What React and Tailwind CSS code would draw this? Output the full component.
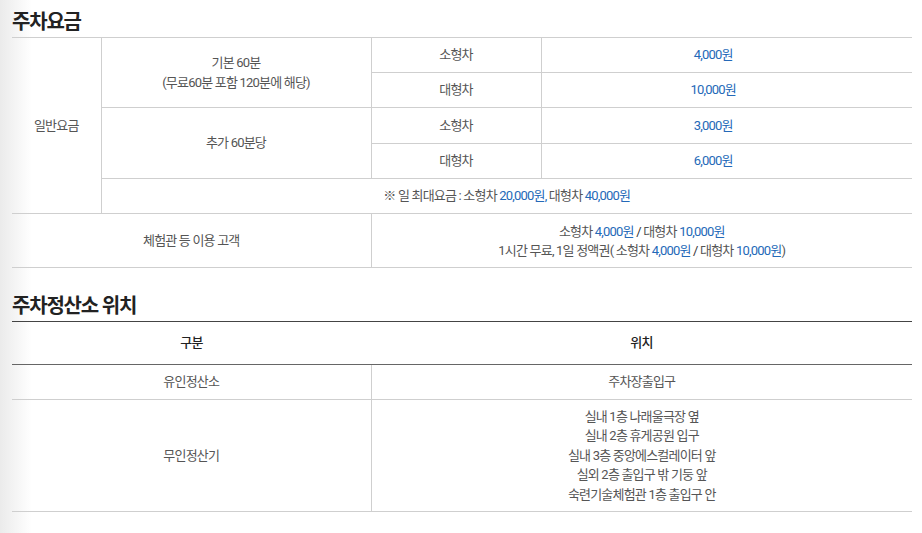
const F = { fontFamily: "Roboto, 'Noto Sans CJK KR', sans-serif" };

const B = ({ children }) => <span className="text-[#2469b8]">{children}</span>;

export default function App() {
  const cell = "border-b border-[#cfcfcf] text-center align-middle p-0";
  const price = cell + " pr-[27px]";
  return (
    <div
      style={F}
      className="min-h-[533px] w-[922px] bg-[linear-gradient(to_right,#ebebeb,#ffffff_32px)] text-[13px] leading-[20px] tracking-[-0.8px] text-[#555]"
    >
      <div className="ml-3 w-[900px] pt-[7px]">
        <h2 className="h-[30px] text-[20px] font-bold leading-[30px] tracking-[-1.2px] text-[#222]">주차요금</h2>
        <table className="w-full border-t border-[#cfcfcf]">
          <colgroup>
            <col className="w-[89px]" />
            <col className="w-[270px]" />
            <col className="w-[170px]" />
            <col />
          </colgroup>
          <tbody>
            <tr className="h-[35px]">
              <td rowSpan={5} className={cell + " border-r"}>일반요금</td>
              <td rowSpan={2} className={cell + " border-r"}>
                기본 60분
                <br />
                (무료60분 포함 120분에 해당)
              </td>
              <td className={cell + " border-r"}>소형차</td>
              <td className={price}><B>4,000원</B></td>
            </tr>
            <tr className="h-[35px]">
              <td className={cell + " border-r"}>대형차</td>
              <td className={price}><B>10,000원</B></td>
            </tr>
            <tr className="h-[36px]">
              <td rowSpan={2} className={cell + " border-r"}>추가 60분당</td>
              <td className={cell + " border-r"}>소형차</td>
              <td className={price}><B>3,000원</B></td>
            </tr>
            <tr className="h-[35px]">
              <td className={cell + " border-r"}>대형차</td>
              <td className={price}><B>6,000원</B></td>
            </tr>
            <tr className="h-[35px]">
              <td colSpan={3} className={cell}>
                ※ 일 최대요금 : 소형차 <B>20,000원,</B> 대형차 <B>40,000원</B>
              </td>
            </tr>
            <tr className="h-[54px]">
              <td colSpan={2} className={cell + " border-r"}>체험관 등 이용 고객</td>
              <td colSpan={2} className={cell + " leading-[19px]"}>
                소형차 <B>4,000원</B> <span className="text-[#333]">/</span> 대형차 <B>10,000원</B>
                <br />
                1시간 무료, 1일 정액권( 소형차 <B>4,000원</B> <span className="text-[#333]">/</span> 대형차 <B>10,000원</B>)
              </td>
            </tr>
          </tbody>
        </table>

        <h2 className="mt-[23px] h-[30px] text-[20px] font-bold leading-[30px] tracking-[-1.2px] text-[#222]">
          주차정산소 위치
        </h2>
        <table className="w-full border-t border-[#444]">
          <colgroup>
            <col className="w-[359px]" />
            <col />
          </colgroup>
          <thead>
            <tr className="h-[43px]">
              <th className="border-b border-[#666] p-0 text-center font-medium text-[#222]">구분</th>
              <th className="border-b border-[#666] p-0 text-center font-medium text-[#222]">위치</th>
            </tr>
          </thead>
          <tbody>
            <tr className="h-[35px]">
              <td className={cell + " border-r"}>유인정산소</td>
              <td className={cell}>주차장출입구</td>
            </tr>
            <tr className="h-[112px]">
              <td className={cell + " border-r"}>무인정산기</td>
              <td className={cell + " leading-[19.5px]"}>
                실내 1층 나래울극장 옆
                <br />
                실내 2층 휴게공원 입구
                <br />
                실내 3층 중앙에스컬레이터 앞
                <br />
                실외 2층 출입구 밖 기둥 앞
                <br />
                숙련기술체험관 1층 출입구 안
              </td>
            </tr>
          </tbody>
        </table>
      </div>
    </div>
  );
}
